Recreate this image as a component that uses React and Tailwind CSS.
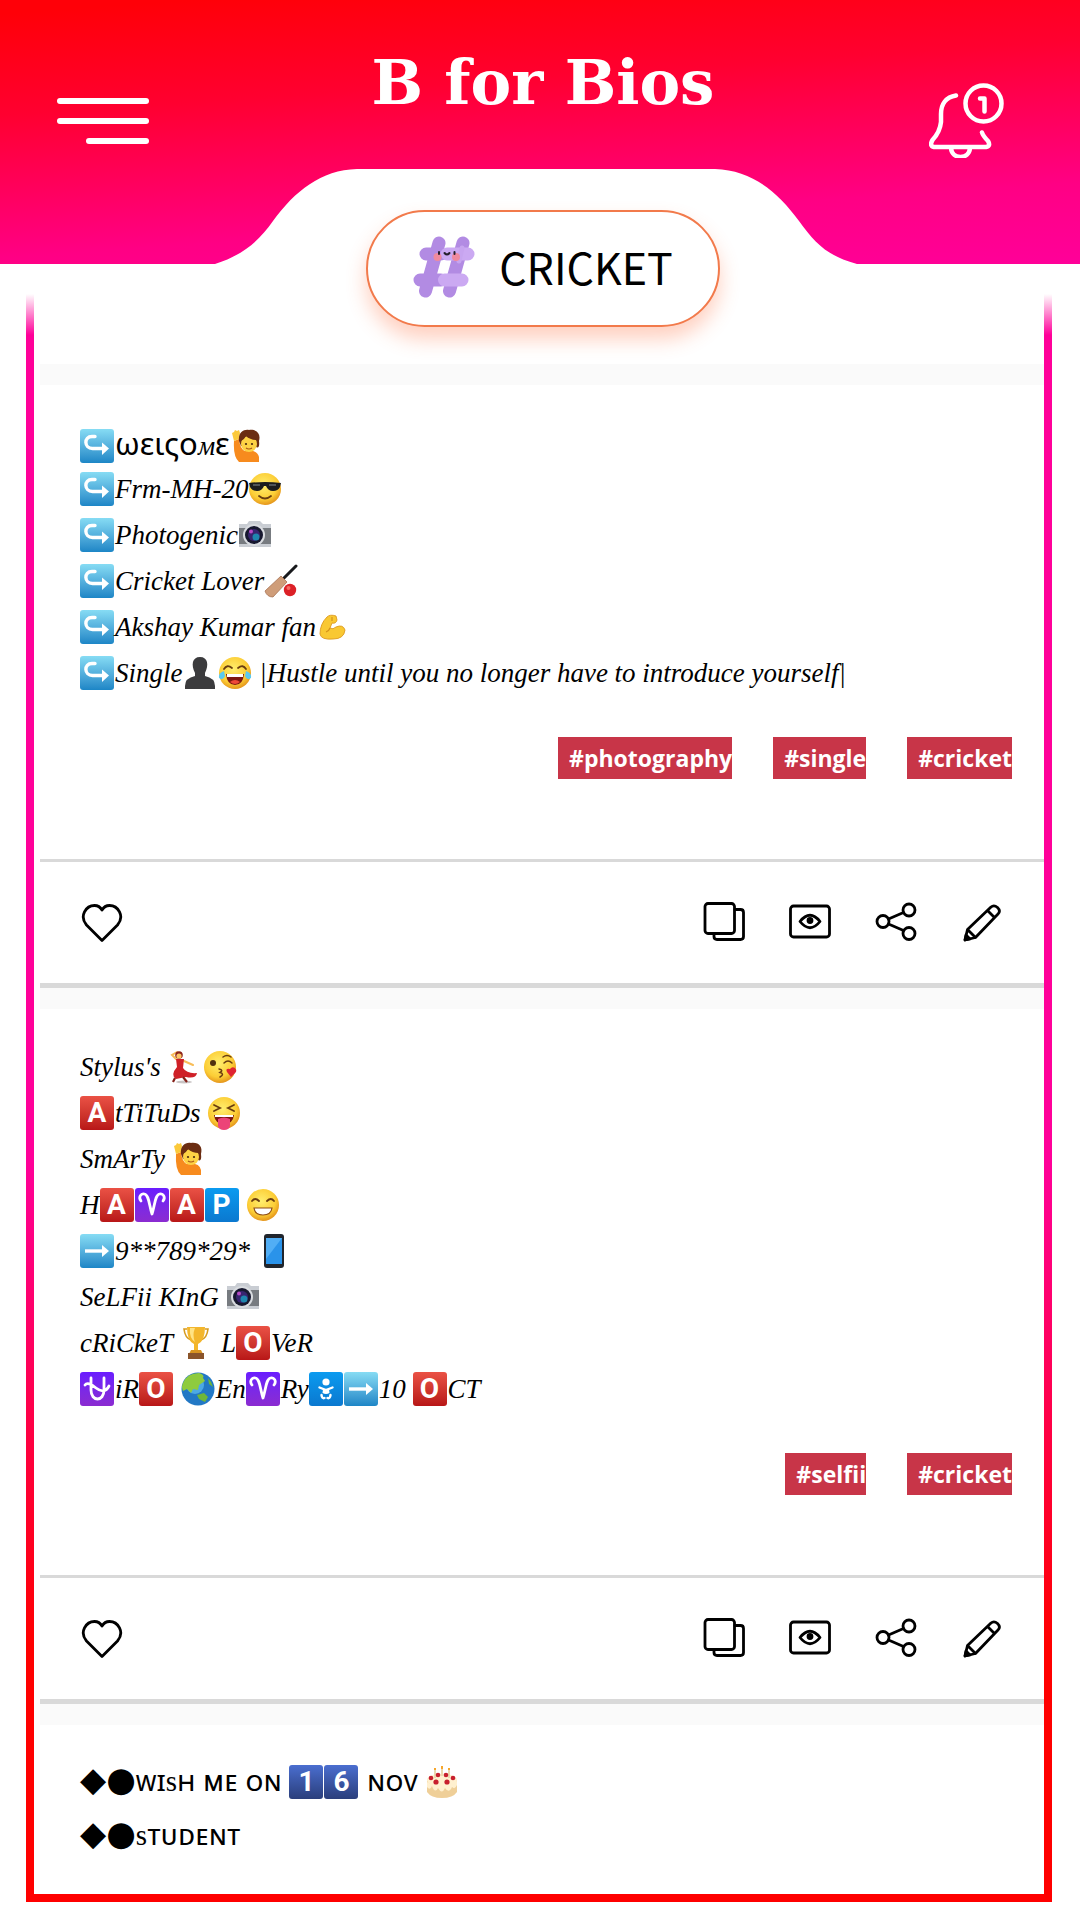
import React, { useState } from 'react';

const Svg = ({ children, label }) => (
    <svg viewBox="0 0 34 34" className="w-full h-full" role="img" aria-label={label}>
        {children}
    </svg>
);

const Face = ({ children, label }) => (
    <Svg label={label}>
        <defs>
            <radialGradient id="face" cx="45%" cy="38%" r="62%">
                <stop offset="0" stopColor="#ffee6e" />
                <stop offset="0.7" stopColor="#fccd35" />
                <stop offset="1" stopColor="#e5961c" />
            </radialGradient>
        </defs>
        <circle cx="17" cy="17" r="16" fill="url(#face)" />
        {children}
    </Svg>
);

const Tile = ({ className, children }) => (
    <span className={`flex items-center justify-center w-full h-full rounded-[3px] ${className}`}>{children}</span>
);

const Letter = ({ className, children }) => (
    <Tile className={className}>
        <span className="font-['Roboto','Liberation_Sans',sans-serif] text-[28px] leading-none font-bold not-italic text-white">{children}</span>
    </Tile>
);

const RED = 'bg-linear-to-b from-[#ea5145] to-[#b81617]';
const PURPLE = 'bg-linear-to-b from-[#6a1cff] to-[#8b2bd0]';
const BLUE = 'bg-linear-to-b from-[#0b9bf0] to-[#0b78cf]';
const SKY = 'bg-linear-to-b from-[#86dcf4] to-[#1c86c6]';
const NAVY = 'bg-linear-to-b from-[#4a6ed0] to-[#2b3f7c]';

const Hook = () => (
    <Tile className={SKY}>
        <Svg label="Arrow curving right">
            <path d="M15 7.500H12C3.500 7.500 4 19.500 12.500 19.500H25" fill="none" stroke="#fff" strokeWidth="3.400" strokeLinecap="round" />
            <path d="M22 13.500L29 19.500L22 26Z" fill="#fff" />
        </Svg>
    </Tile>
);

const Arrow = () => (
    <Tile className={SKY}>
        <Svg label="Right arrow">
            <path d="M5 17H24" stroke="#fff" strokeWidth="3.400" />
            <path d="M22 11L29 17L22 23Z" fill="#fff" />
        </Svg>
    </Tile>
);

const Aries = () => (
    <Tile className={PURPLE}>
        <Svg label="Aries">
            <path d="M6 13C3 9 6 5 9.500 6C14 7 14 17 17 26C20 17 20 7 24.500 6C28 5 31 9 28 13" fill="none" stroke="#fff" strokeWidth="2.800" strokeLinecap="round" strokeLinejoin="round" />
        </Svg>
    </Tile>
);

const Ophiuchus = () => (
    <Tile className={PURPLE}>
        <Svg label="Ophiuchus">
            <path d="M11 6V18C11 30 24 30 24 18V6M5 13C7 10 11 12 16 16S26 20 29 14" fill="none" stroke="#fff" strokeWidth="2.800" strokeLinecap="round" />
        </Svg>
    </Tile>
);

const Baby = () => (
    <Tile className={BLUE}>
        <Svg label="Baby">
            <circle cx="17" cy="10" r="3.600" fill="#fff" />
            <path d="M10.500 15.500L17 18L23.500 15.500M12.500 23Q13 27 15.500 26M21.500 23Q21 27 18.500 26" fill="none" stroke="#fff" strokeWidth="2.400" strokeLinecap="round" />
            <path d="M14 17H20L20.500 21Q17 23 13.500 21Z" fill="#fff" />
        </Svg>
    </Tile>
);

const RaisedHand = () => (
    <Svg label="Person raising hand">
        <path d="M4 12L9 10Q10 20 15 22Q27 20 29 28V33H9Q3 28 4 12Z" fill="#f78b1e" />
        <path d="M2 4L4 3L5 1L7 2L9 1L10 4L9 10L4 12Z" fill="#fbc93a" />
        <path d="M9 12C8 3 14 0 19 1C27 0 31 5 29 12Q30 20 26 18L11 17Z" fill="#6b2d12" />
        <ellipse cx="19" cy="15" rx="8" ry="8" fill="#fdd245" />
        <path d="M11 12Q14 11 16 7Q20 11 27 11L27 7Q22 3 16 4Q11 6 11 12Z" fill="#6b2d12" />
        <circle cx="16" cy="15" r="1.100" fill="#4a2a10" />
        <circle cx="22" cy="15" r="1.100" fill="#4a2a10" />
        <path d="M16 19Q19 21 22 19" fill="none" stroke="#a8551a" strokeWidth="1.200" />
    </Svg>
);

const Camera = () => (
    <Svg label="Camera">
        <path d="M1 6H9L11 3H22L25 6H33V29H1Z" fill="#c9cdd3" />
        <path d="M1 10H33V26H1Z" fill="#777b80" />
        <circle cx="16" cy="17" r="11" fill="#d9dce0" />
        <circle cx="16" cy="17" r="9" fill="#17182f" />
        <circle cx="16" cy="17" r="6" fill="#37256f" />
        <circle cx="18" cy="19" r="3.500" fill="#1f86ae" />
        <circle cx="13" cy="13.500" r="2" fill="#b44ac4" />
    </Svg>
);

const EMOJI = {
    hook: <Hook />,
    arrow: <Arrow />,
    aries: <Aries />,
    ophiuchus: <Ophiuchus />,
    baby: <Baby />,
    hand: <RaisedHand />,
    camera: <Camera />,
    a: <Letter className={RED}>A</Letter>,
    o: <Letter className={RED}>O</Letter>,
    p: <Letter className={BLUE}>P</Letter>,
    one: <Letter className={NAVY}>1</Letter>,
    six: <Letter className={NAVY}>6</Letter>,
    cool: (
        <Face label="Sunglasses">
            <path d="M1 11Q17 9 33 11L32 15Q30 19 25 19Q20 19 18 14H16Q14 19 9 19Q4 19 2 15Z" fill="#1c1c1e" />
            <path d="M5 13H12M21 13H28" stroke="#61656b" strokeWidth="1.500" />
            <path d="M11 24Q17 29 23 24" fill="none" stroke="#6a3d10" strokeWidth="1.800" strokeLinecap="round" />
        </Face>
    ),
    bat: (
        <Svg label="Cricket bat and ball">
            <path d="M20 14L32 2" stroke="#18191c" strokeWidth="3" strokeLinecap="round" />
            <path d="M17 12L23 18L9 33Q3 33 1 27Z" fill="#cf9d79" stroke="#a87454" strokeWidth="0.800" />
            <circle cx="26" cy="26" r="6.200" fill="#dc2027" />
            <circle cx="24.500" cy="24" r="2" fill="#f46a62" />
        </Svg>
    ),
    biceps: (
        <Svg label="Flexed biceps">
            <path d="M11 7Q14 4 20 6L21 10Q20 14 16 13L14 18Q17 20 20 17Q27 14 29 20Q28 29 17 29Q5 30 4 24Q4 14 11 7Z" fill="#f9c832" stroke="#dd9a1d" strokeWidth="0.900" />
            <path d="M14 18Q13 21 10 22M16 7V11" fill="none" stroke="#d4931b" strokeWidth="1.200" />
        </Svg>
    ),
    bust: (
        <Svg label="Silhouette">
            <path d="M17 1C25 1 26 9 22 17V20Q32 22 32 30V33H2V30Q2 22 12 20V17C8 9 9 1 17 1Z" fill="#3b3b3d" />
        </Svg>
    ),
    joy: (
        <Face label="Tears of joy">
            <path d="M6 13Q9 8 14 12M20 12Q25 8 28 13" fill="none" stroke="#6a3d10" strokeWidth="1.800" strokeLinecap="round" />
            <path d="M8 18H26Q25 29 17 29Q9 29 8 18Z" fill="#7d170f" />
            <path d="M9 18H25V21H9Z" fill="#fff" />
            <path d="M12 26Q17 22 22 26Q17 30 12 26Z" fill="#ef4838" />
            <path d="M6 15Q0 17 1 22Q5 25 7 20ZM28 15Q34 17 33 22Q29 25 27 20Z" fill="#5bc9ef" />
        </Face>
    ),
    dancer: (
        <Svg label="Dancer">
            <ellipse cx="16" cy="32" rx="8" ry="1.500" fill="#c9c4c4" />
            <path d="M16 11L25 15M8 9L4 5L9 2" fill="none" stroke="#f8bd58" strokeWidth="2" strokeLinecap="round" />
            <circle cx="11" cy="5" r="3.800" fill="#8d241a" />
            <circle cx="11" cy="6" r="2.600" fill="#fbc763" />
            <path d="M8 9L16 9L15 18Q19 24 29 23Q28 29 18 27L8 29Q2 25 9 17Z" fill="#cf2027" />
            <path d="M7 28L5 32M15 27L19 32" stroke="#842018" strokeWidth="2.200" />
        </Svg>
    ),
    kiss: (
        <Face label="Blowing a kiss">
            <circle cx="10" cy="13" r="3" fill="#51300f" />
            <path d="M21 13Q25 9 29 13M20 7Q24 4 28 7" fill="none" stroke="#6a3d10" strokeWidth="1.500" strokeLinecap="round" />
            <path d="M16 19Q21 20 17 22.500Q22 24 17 27" fill="none" stroke="#6a3d10" strokeWidth="1.500" strokeLinecap="round" />
            <path d="M27 19Q29 16 32 18Q34 20 33 22L28 27L24 22Q22 18 27 19Z" fill="#df2432" />
        </Face>
    ),
    tongue: (
        <Face label="Squinting with tongue">
            <path d="M7 9L13 12L7 15M27 9L21 12L27 15" fill="none" stroke="#6a3d10" strokeWidth="1.800" strokeLinecap="round" />
            <path d="M7 19H27Q26 28 17 28Q8 28 7 19Z" fill="#7d170f" />
            <path d="M8 19H26V21H8Z" fill="#fff" />
            <path d="M11 23Q17 20 23 23V30Q22 34 17 34Q12 34 11 30Z" fill="#ec4478" />
        </Face>
    ),
    grin: (
        <Face label="Beaming">
            <path d="M6 13Q9 9 13 13M21 13Q25 9 28 13" fill="none" stroke="#6a3d10" strokeWidth="1.800" strokeLinecap="round" />
            <path d="M8 20H26Q25 27 17 27Q9 27 8 20Z" fill="#fff" stroke="#8e4d17" strokeWidth="1.200" />
        </Face>
    ),
    phone: (
        <Svg label="Mobile phone">
            <rect x="7" y="0" width="20" height="34" rx="3" fill="#20252d" />
            <rect x="9" y="4" width="16" height="26" fill="#2a93ea" />
            <path d="M9 4H25L9 25Z" fill="#51aef5" />
        </Svg>
    ),
    trophy: (
        <Svg label="Trophy">
            <path d="M8 3H5Q6 12 12 14M26 3H29Q28 12 22 14" fill="none" stroke="#d79b1f" strokeWidth="1.600" />
            <path d="M8 1H26Q26 15 19 18V24H15V18Q8 15 8 1Z" fill="#f3b62c" />
            <path d="M11 2H16Q13 9 16 16Q10 12 11 2Z" fill="#ffe384" />
            <path d="M12 24H22L24 28H10Z" fill="#d89420" />
            <rect x="9" y="27" width="16" height="6" fill="#8a542a" />
        </Svg>
    ),
    globe: (
        <Svg label="Globe">
            <circle cx="17" cy="17" r="16.500" fill="#2278c5" />
            <circle cx="14" cy="13" r="9" fill="#4ca9e4" />
            <path d="M2 11Q6 1 18 1Q24 3 22 6L24 9L18 13L17 18L12 17L10 21L6 17L2 19Q0 15 2 11Z" fill="#8ecb3e" />
            <path d="M16 23L23 21L27 25L24 30L18 27ZM27 6Q31 10 32 15L28 12Z" fill="#6eb639" />
        </Svg>
    ),
    cake: (
        <Svg label="Birthday cake">
            <path d="M2 15Q17 8 32 15V27Q28 33 17 33Q6 33 2 27Z" fill="#efcf98" />
            <ellipse cx="17" cy="15" rx="15" ry="6.500" fill="#fff0cf" />
            <path d="M2 17V22Q5 26 7 21Q10 29 13 23Q17 30 20 23Q24 29 27 22Q30 25 32 20V16Q17 25 2 17Z" fill="#fff0cf" />
            <path d="M10 13V5M17 11V4M24 13V5" stroke="#ead9b0" strokeWidth="2" />
            <path d="M10 5V3M17 4V1M24 5V3" stroke="#f6a62b" strokeWidth="2" />
            <g fill="#c81f2e">
                <circle cx="6" cy="13" r="2.300" />
                <circle cx="13" cy="10" r="2.300" />
                <circle cx="21" cy="10" r="2.300" />
                <circle cx="28" cy="13" r="2.300" />
                <circle cx="11" cy="17" r="2.600" />
                <circle cx="22" cy="17" r="2.600" />
            </g>
        </Svg>
    ),
};

// overflow-hidden keeps the baseline on the box edge, also for tiles that hold a letter
const E = ({ n }) => <span className="inline-block overflow-hidden align-[-8px] w-[34px] h-[34px] mr-px">{EMOJI[n]}</span>;

const GREEK = "font-['Noto_Sans','Open_Sans',sans-serif] not-italic text-[31px]";

const BIOS = [
    {
        lines: [
            <><E n="hook" /><span className={GREEK}>ωειςo</span>м<span className={GREEK}>ε</span><E n="hand" /></>,
            <><E n="hook" />Frm-MH-20<E n="cool" /></>,
            <><E n="hook" />Photogenic<E n="camera" /></>,
            <><E n="hook" />Cricket Lover<E n="bat" /></>,
            <><E n="hook" />Akshay Kumar fan<E n="biceps" /></>,
            <><E n="hook" />Single<E n="bust" /><E n="joy" /> |Hustle until you no longer have to introduce yourself|</>,
        ],
        tags: ['#photography', '#single', '#cricket'],
    },
    {
        lines: [
            <>Stylus's <E n="dancer" /><E n="kiss" /></>,
            <><E n="a" />tTiTuDs <E n="tongue" /></>,
            <>SmArTy <E n="hand" /></>,
            <>H<E n="a" /><E n="aries" /><E n="a" /><E n="p" /> <E n="grin" /></>,
            <><E n="arrow" />9**789*29* <E n="phone" /></>,
            <>SeLFii KInG <E n="camera" /></>,
            <>cRiCkeT <E n="trophy" /> L<E n="o" />VeR</>,
            <><E n="ophiuchus" />iR<E n="o" /> <E n="globe" />En<E n="aries" />Ry<E n="baby" /><E n="arrow" />10 <E n="o" />CT</>,
        ],
        tags: ['#selfii', '#cricket'],
    },
];

const Icon = ({ children }) => (
    <svg viewBox="0 0 42 42" className="w-[42px] h-[42px]" fill="none" stroke="#000" strokeWidth="2.800" strokeLinecap="round" strokeLinejoin="round" aria-hidden="true">
        {children}
    </svg>
);

const Actions = () => {
    const [liked, setLiked] = useState(false);

    return (
        <div className="flex items-center justify-between h-[121px] px-[41px]">
            <button type="button" aria-label="Like" aria-pressed={liked} onClick={() => setLiked(!liked)}>
                <Icon>
                    <path d="M21 38.500L5.500 23C-2 14 5 3.500 13.500 3.500Q18.500 3.500 21 8Q23.500 3.500 28.500 3.500C37 3.500 44 14 36.500 23Z" fill={liked ? '#c83548' : 'none'} />
                </Icon>
            </button>
            <div className="flex items-center gap-11">
                <button type="button" aria-label="Copy">
                    <Icon>
                        <rect x="2" y="1.500" width="29.500" height="30" rx="3" />
                        <path d="M32 7.500H37.500Q40.500 7.500 40.500 10.500V34.500Q40.500 37.500 37.500 37.500H14Q11 37.500 11 34.500V32" />
                    </Icon>
                </button>
                <button type="button" aria-label="Preview">
                    <Icon>
                        <rect x="1.500" y="4" width="39" height="31" rx="3" />
                        <path d="M11 19.500Q21 7 31 19.500Q21 32 11 19.500Z" />
                        <circle cx="21" cy="18.500" r="2" fill="#000" />
                    </Icon>
                </button>
                <button type="button" aria-label="Share">
                    <Icon>
                        <circle cx="8" cy="19.500" r="6" />
                        <circle cx="34" cy="8" r="6" />
                        <circle cx="34" cy="31.500" r="6" />
                        <path d="M13.500 17L28.500 10.500M13.500 22L28.500 28.500" />
                    </Icon>
                </button>
                <button type="button" aria-label="Edit">
                    <Icon>
                        <path d="M4 38L6.500 27.500L30 5Q33 2.500 36.500 5.500Q40 9 37 12L14.500 35.500ZM6.500 27.500L14.500 35.500M26.500 8.500L33.500 15.500" />
                        <path d="M4 38L5 33L9 37Z" fill="#000" />
                    </Icon>
                </button>
            </div>
        </div>
    );
};

const BioCard = ({ bio }) => (
    <article className="border-b-[5px] border-[#d9d9d9]">
        <div className="px-10 pt-[35px] font-['Liberation_Serif',serif] italic text-[27px]">
            {bio.lines.map((line, i) => (
                <p key={i} className="h-[46px] leading-[46px] whitespace-nowrap">{line}</p>
            ))}
        </div>
        <div className="flex justify-end gap-[41px] mt-[41px] mb-20 pr-8">
            {bio.tags.map((tag) => (
                <a key={tag} href="#tag" className="h-[42px] pl-[11px] bg-[#c83548] font-['Open_Sans',sans-serif] text-[23px] leading-[42px] font-bold text-white">{tag}</a>
            ))}
        </div>
        <div className="border-t-[3px] border-[#d9d9d9]">
            <Actions />
        </div>
    </article>
);

const Strip = () => <div className="h-[21px] bg-[#fafafa]" />;

const SmallS = () => <span className="font-['Liberation_Serif',serif]">s</span>;

const Bullets = () => <span className="font-['DejaVu_Sans',sans-serif] text-[34px] leading-none">◆●</span>;

const HashIcon = () => (
    <svg viewBox="0 0 62 62" className="w-[62px] h-[62px]" fill="none" strokeWidth="13" strokeLinecap="round" aria-hidden="true">
        <path d="M26 7L12.500 55M50 7L36.500 55M13 18H28M7 44H28" stroke="#b28be3" />
        <path d="M34 18H55M31.500 44H49" stroke="#cba9f2" />
        <path d="M49 12L46 25" stroke="#c7a4ef" strokeWidth="5" />
        <circle cx="24.500" cy="21" r="4" fill="#f08a9e" />
        <circle cx="43" cy="21" r="4" fill="#f08a9e" />
        <path d="M26 16V18M41.500 16V18M31.500 17Q34 20 36.500 17" stroke="#26202c" strokeWidth="2" />
    </svg>
);

const Header = () => (
    <header className="flex flex-col justify-between h-[264px] bg-[linear-gradient(176deg,#ff0008_4%,#ff0030_34%,#ff0084_76%,#ff0099_100%)]">
        <div className="flex items-start justify-between pl-[57px] pr-[75px]">
            <button type="button" aria-label="Menu" className="flex flex-col items-end gap-[14px] w-[92px] mt-[98px]">
                <span className="w-full h-[6px] rounded-full bg-white" />
                <span className="w-full h-[6px] rounded-full bg-white" />
                <span className="w-[63px] h-[6px] rounded-full bg-white" />
            </button>
            <h1 className="mt-9 pl-2 font-['DejaVu_Serif',serif] text-[61px] leading-[94px] font-bold text-white">B for Bios</h1>
            <button type="button" aria-label="Notifications" className="mt-[82px]">
                <svg viewBox="0 0 76 76" className="w-[76px] h-[76px]" fill="none" stroke="#fff" strokeWidth="4.500" strokeLinecap="round" strokeLinejoin="round" aria-hidden="true">
                    <path d="M27 13.500C17 15 12 22 12 32V40Q11 50 3.500 58Q0 64 5 65H57Q62 64 59 59Q54 54 53 50.500" />
                    <path d="M22 66C23 78 40 78 41 66" />
                    <circle cx="54.500" cy="21.500" r="18" />
                    <path d="M51 16.500H55.500V29.500" />
                </svg>
            </button>
        </div>
        <svg viewBox="0 0 642 95" className="w-[642px] h-[95px] mr-2 self-center -mt-6" fill="#fff" aria-hidden="true">
            <path d="M0 95C28 86 44 72 58 52C80 22 106 1 142 0H500C536 1 562 22 584 52C600 74 612 87 642 95Z" />
        </svg>
    </header>
);

const App = () => (
    <div className="min-h-screen bg-white pb-[18px] text-black">
        <Header />
        <nav className="relative z-10 flex justify-center pl-[6px] -mt-[54px]">
            <a href="#cricket" className="flex items-center gap-6 h-[117px] px-[45px] pb-1 rounded-full border-2 border-[#f27a4b] bg-white shadow-[0_12px_20px_rgba(255,110,60,0.32)] font-['Noto_Sans_CJK_SC',sans-serif] text-[43px] leading-none">
                <HashIcon />
                CRICKET
            </a>
        </nav>
        <main className="ml-[26px] mr-7 -mt-9 px-2 pb-2 bg-[linear-gradient(to_bottom,#fff_3px,#ff0099_44px,#ff0099_54%,#ff0000_84%)]">
            <div className="bg-white pl-[6px] pt-[73px] pb-[33px]">
                {BIOS.map((bio, i) => (
                    <React.Fragment key={i}>
                        <Strip />
                        <BioCard bio={bio} />
                    </React.Fragment>
                ))}
                <Strip />
                <article className="px-10 pt-7 font-['Noto_Sans','Open_Sans',sans-serif] text-[29px]">
                    <p className="h-[54px] leading-[54px] whitespace-nowrap"><Bullets />ᴡɪ<SmallS />ʜ ᴍᴇ ᴏɴ <E n="one" /><E n="six" /> ɴᴏᴠ <E n="cake" /></p>
                    <p className="h-[54px] leading-[54px] whitespace-nowrap"><Bullets /><SmallS />ᴛᴜᴅᴇɴᴛ</p>
                </article>
            </div>
        </main>
    </div>
);

export default App;
